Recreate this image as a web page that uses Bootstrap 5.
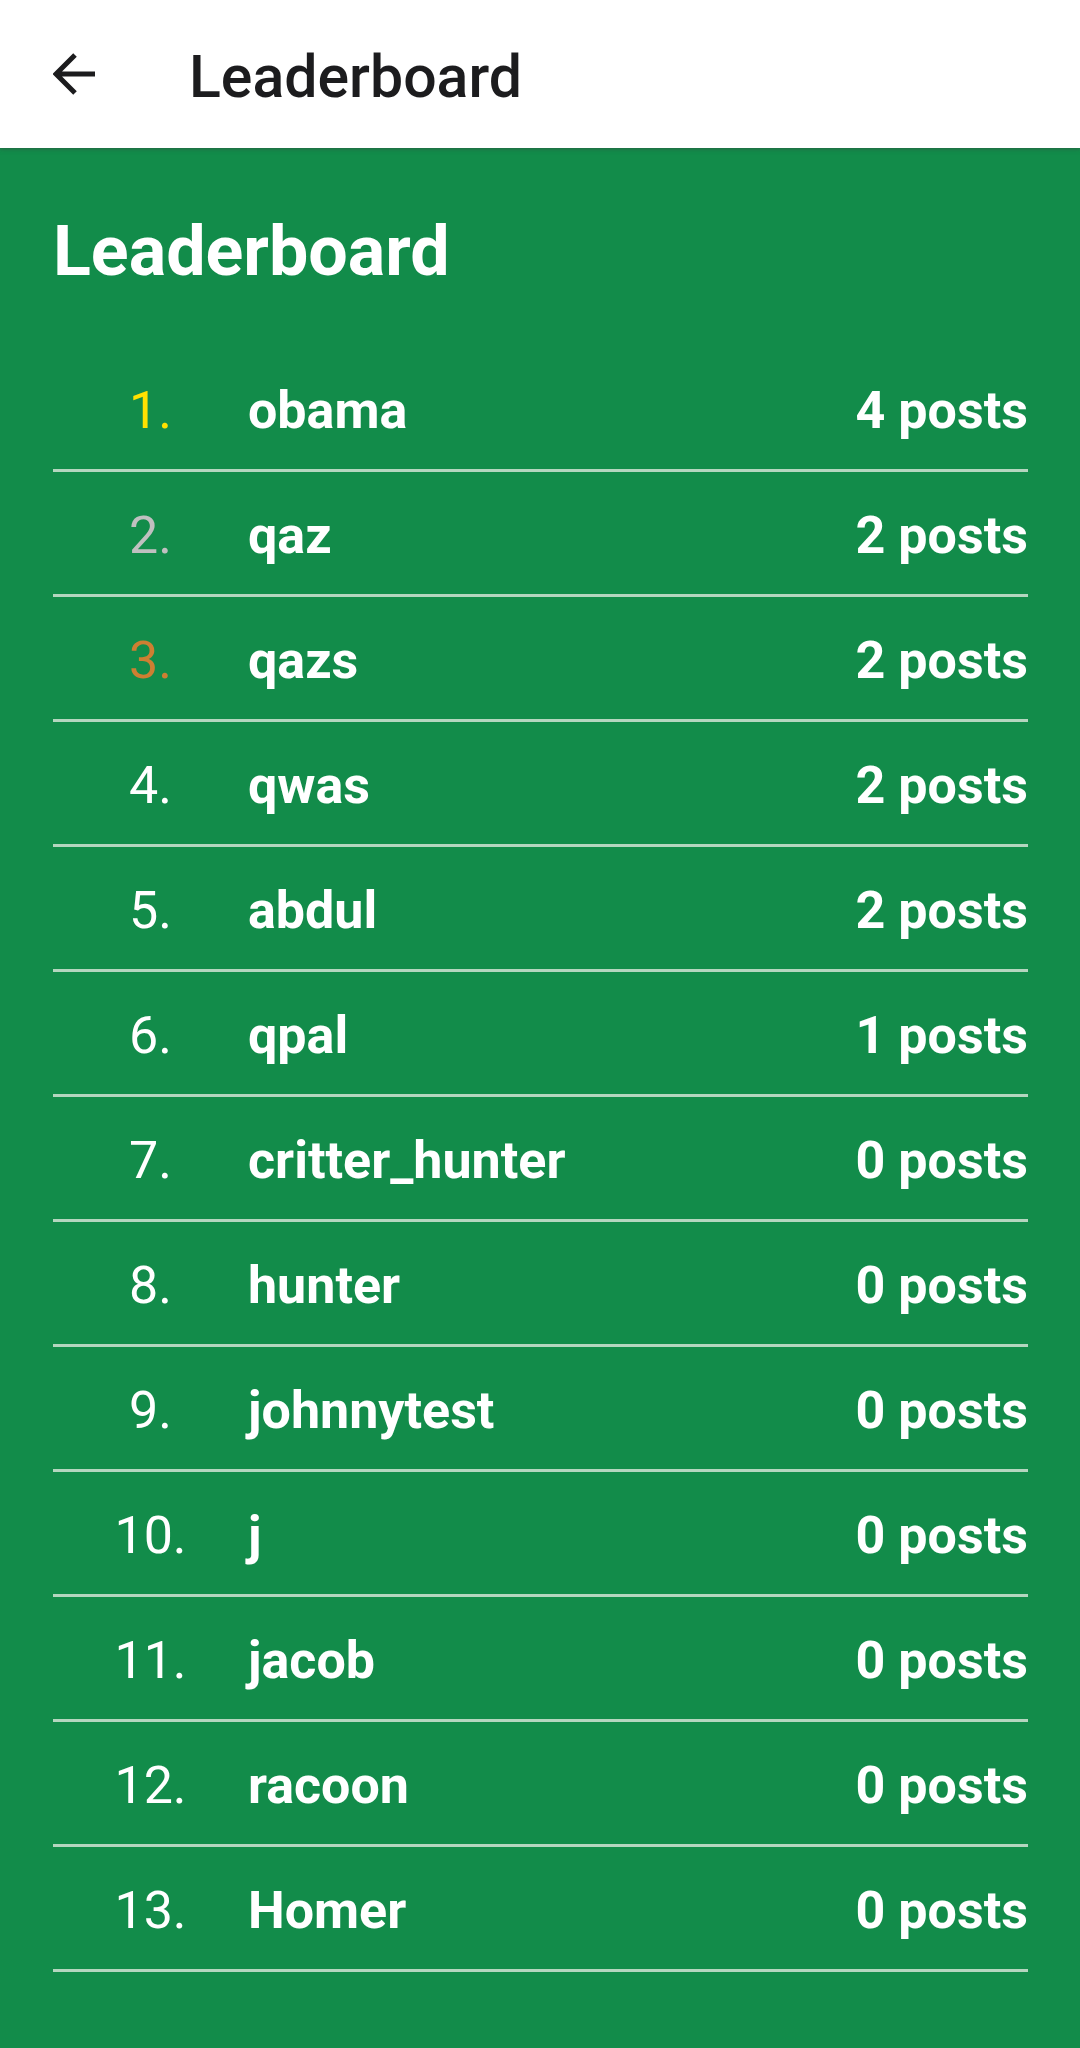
<!DOCTYPE html>
<html lang="en">
<head>
<meta charset="utf-8">
<meta name="viewport" content="width=device-width, initial-scale=1">
<title>Leaderboard</title>
<link href="https://cdn.jsdelivr.net/npm/bootstrap@5.3.0/dist/css/bootstrap.min.css" rel="stylesheet">
<style>
body{font-family:Roboto,"Liberation Sans",sans-serif;background:#128c4a;font-size:52px;line-height:60px}
.app-bar{height:148px;padding:0 53px;background:#fff;color:#1c1c1e;box-shadow:0 1px 4px rgba(60,60,60,.5)}
.back-btn{width:44px;height:44px;margin-right:92px;color:#1c1c1e}
.app-title{font-size:59px;line-height:64px;font-weight:500;padding-top:6px}
.board{padding:63px 52px 62px 53px}
.board-title{font-size:70px;line-height:80px;font-weight:700;margin-bottom:56px}
.entry{height:125px;padding-top:5px;border-bottom:3px solid #b4d6bf}
.rank{width:195px}
.gold{color:#ffe100}.silver{color:#c0c0c0}.bronze{color:#cd7f32}
</style>
</head>
<body>
<header class="app-bar d-flex align-items-center">
<button type="button" class="back-btn btn p-0 border-0 d-flex" aria-label="Back"><svg width="44" height="44" viewBox="0 0 44 44" fill="none" stroke="currentColor" stroke-width="5"><path d="M42 22H4M22 3 3 22 22 41"/></svg></button>
<h1 class="app-title m-0">Leaderboard</h1>
</header>
<main class="board text-white">
<h2 class="board-title mt-0">Leaderboard</h2>
<ol class="list-unstyled m-0">
<li class="entry d-flex align-items-center"><span class="rank text-center gold">1.</span><strong class="flex-grow-1">obama</strong><strong>4 posts</strong></li>
<li class="entry d-flex align-items-center"><span class="rank text-center silver">2.</span><strong class="flex-grow-1">qaz</strong><strong>2 posts</strong></li>
<li class="entry d-flex align-items-center"><span class="rank text-center bronze">3.</span><strong class="flex-grow-1">qazs</strong><strong>2 posts</strong></li>
<li class="entry d-flex align-items-center"><span class="rank text-center">4.</span><strong class="flex-grow-1">qwas</strong><strong>2 posts</strong></li>
<li class="entry d-flex align-items-center"><span class="rank text-center">5.</span><strong class="flex-grow-1">abdul</strong><strong>2 posts</strong></li>
<li class="entry d-flex align-items-center"><span class="rank text-center">6.</span><strong class="flex-grow-1">qpal</strong><strong>1 posts</strong></li>
<li class="entry d-flex align-items-center"><span class="rank text-center">7.</span><strong class="flex-grow-1">critter_hunter</strong><strong>0 posts</strong></li>
<li class="entry d-flex align-items-center"><span class="rank text-center">8.</span><strong class="flex-grow-1">hunter</strong><strong>0 posts</strong></li>
<li class="entry d-flex align-items-center"><span class="rank text-center">9.</span><strong class="flex-grow-1">johnnytest</strong><strong>0 posts</strong></li>
<li class="entry d-flex align-items-center"><span class="rank text-center">10.</span><strong class="flex-grow-1">j</strong><strong>0 posts</strong></li>
<li class="entry d-flex align-items-center"><span class="rank text-center">11.</span><strong class="flex-grow-1">jacob</strong><strong>0 posts</strong></li>
<li class="entry d-flex align-items-center"><span class="rank text-center">12.</span><strong class="flex-grow-1">racoon</strong><strong>0 posts</strong></li>
<li class="entry d-flex align-items-center"><span class="rank text-center">13.</span><strong class="flex-grow-1">Homer</strong><strong>0 posts</strong></li>
</ol>
</main>
<script src="https://cdn.jsdelivr.net/npm/bootstrap@5.3.0/dist/js/bootstrap.bundle.min.js"></script>
</body>
</html>
